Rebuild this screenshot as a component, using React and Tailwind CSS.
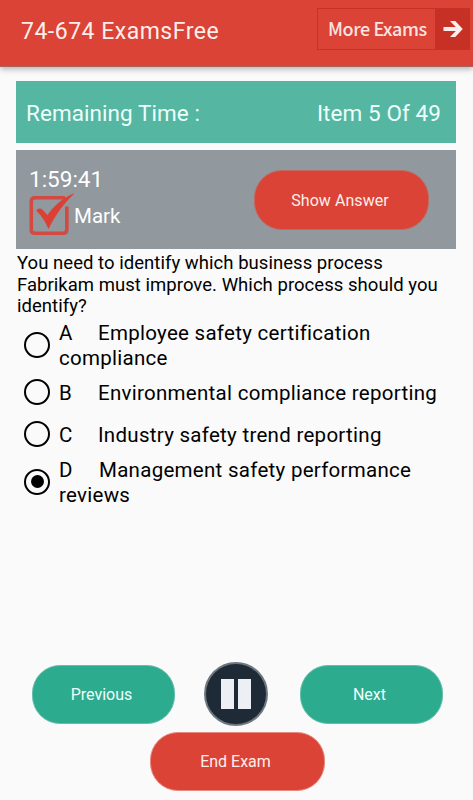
import React, { useState } from 'react';

const options = [
    { id: 'A', lines: ['Employee safety certification', 'compliance'], row: 'h-[50px] mt-[3px]', gap: 'w-[39px]' },
    { id: 'B', lines: ['Environmental compliance reporting'], row: 'h-[42px] mt-[1px]', gap: 'w-[39px]' },
    { id: 'C', lines: ['Industry safety trend reporting'], row: 'h-[42px]', gap: 'w-[39px]' },
    { id: 'D', lines: ['Management safety performance', 'reviews'], row: 'h-[50px] mt-[2px]', gap: 'w-[40px]' },
];

const Radio = ({ checked }) => (
    <span className="w-[26px] h-[26px] mb-[3px] shrink-0 rounded-full border-[2.5px] border-black flex items-center justify-center">
        {checked && <span className="w-[13px] h-[13px] rounded-full bg-black"></span>}
    </span>
);

const App = () => {
    const [selected, setSelected] = useState('D');

    return (
        <div className="w-[473px] h-[800px] overflow-hidden bg-[#fafafa] flex flex-col font-['Roboto','Liberation_Sans',sans-serif] text-black whitespace-nowrap">
            <header className="h-[67px] shrink-0 bg-[#da4336] border-b border-[#a8655e] shadow-[0_2px_6px_rgba(0,0,0,0.3)] flex items-start justify-between pl-[21px] pr-[3px]">
                <h1 className="mt-[16px] text-[23px] leading-[32px] tracking-[0.5px] text-[#fdeeec]">74-674 ExamsFree</h1>
                <button className="mt-[8px] w-[153px] h-[42px] border border-[#c63226] flex items-stretch text-[#fbe3e0]">
                    <span className="flex-1 pl-[10px] text-left font-['Noto_Sans_CJK_SC','Noto_Sans',sans-serif] font-medium text-[18px] leading-[39px] tracking-[-0.4px]">More Exams</span>
                    <span className="w-[34px] bg-[#c73025] flex items-center justify-center pl-[2px]">
                        <svg width="20" height="16" viewBox="0 0 20 16" fill="#fdeeec">
                            <path d="M0.500 6H12.800L7 0H12.200L19.800 8L12.200 16H7L12.800 10H0.500Z" />
                        </svg>
                    </span>
                </button>
            </header>

            <main className="pl-[16px] pr-[17px]">
                <div className="mt-[14px] h-[62px] w-[440px] bg-[#55b6a2] flex items-center justify-between pl-[10px] pr-[15px] pt-[2px] text-[22.5px] leading-[30px] text-[#edfffb]">
                    <span className="tracking-[0.06px]">Remaining Time :</span>
                    <span className="tracking-[0.08px]">Item 5 Of 49</span>
                </div>

                <div className="mt-[7px] h-[99px] w-[440px] bg-[#91989e] flex items-start justify-between pl-[13px] pr-[27px] text-white">
                    <div>
                        <div className="mt-[15px] h-[28px] text-[22.5px] leading-[28px]">1:59:41</div>
                        <button className="flex items-start">
                            <svg width="45" height="44" viewBox="0 0 45 44" fill="none">
                                <path d="M36 4.700H6Q2.300 4.700 2.300 8.500V36.500Q2.300 40.300 6 40.300H34Q37.800 40.300 37.800 36.500V13.500" stroke="#d24a42" strokeWidth="3.6" />
                                <path d="M7.500 17.500Q10 14.500 13 16.500L18.500 22.500C24 14 33 5.500 44.500 1C35 10 26 22 19.500 35.500C17 29 13 23 7.500 17.500Z" fill="#dc4034" stroke="#dc4034" strokeWidth="0.6" />
                            </svg>
                            <span className="mt-[9px] text-[20.5px] leading-[28px]">Mark</span>
                        </button>
                    </div>
                    <button className="mt-[20px] w-[175px] h-[60px] rounded-[28px] bg-[#da4336] border border-[#bf6a63] text-[#fdeeec] text-[16px] tracking-[0.05px] pr-[3px] pt-px">Show Answer</button>
                </div>

                <p className="mt-[4px] pl-[1px] text-[18.5px] leading-[21.7px] tracking-[0.04px]">
                    You need to identify which business process<br />
                    Fabrikam must improve. Which process should you<br />
                    identify?
                </p>

                <div>
                    {options.map((o) => (
                        <button
                            key={o.id}
                            onClick={() => setSelected(o.id)}
                            className={`flex items-center pl-[8px] gap-[9px] text-left text-[20.5px] leading-[25px] tracking-[0.28px] ${o.row}`}
                        >
                            <Radio checked={selected === o.id} />
                            <span>
                                <span className="flex">
                                    <span className={o.gap}>{o.id}</span>
                                    <span>{o.lines[0]}</span>
                                </span>
                                {o.lines[1] && <span className="block">{o.lines[1]}</span>}
                            </span>
                        </button>
                    ))}
                </div>
            </main>

            <footer className="mt-auto h-[138px] shrink-0 flex flex-col items-center pl-px text-[16px] text-[#f0fffb]">
                <div className="flex items-center">
                    <button className="w-[143px] h-[59px] pt-[2px] pr-[3px] rounded-[28px] bg-[#2dab8f] border border-[#66bfab]">Previous</button>
                    <button className="ml-[29px] mr-[32px] w-[64px] h-[64px] rounded-full bg-[#1e2b37] border-2 border-[#6d7780] flex items-center justify-center gap-[4px]">
                        <span className="w-[13px] h-[30px] bg-[#eceff3]"></span>
                        <span className="w-[13px] h-[30px] bg-[#eceff3]"></span>
                    </button>
                    <button className="w-[143px] h-[59px] pt-[2px] pr-[3px] rounded-[28px] bg-[#2dab8f] border border-[#66bfab]">Next</button>
                </div>
                <button className="mt-[6px] w-[175px] h-[59px] pt-px pr-[3px] rounded-[28px] bg-[#da4336] border border-[#e8897f] text-[#fdeeec]">End Exam</button>
            </footer>
        </div>
    );
};

export default App;
